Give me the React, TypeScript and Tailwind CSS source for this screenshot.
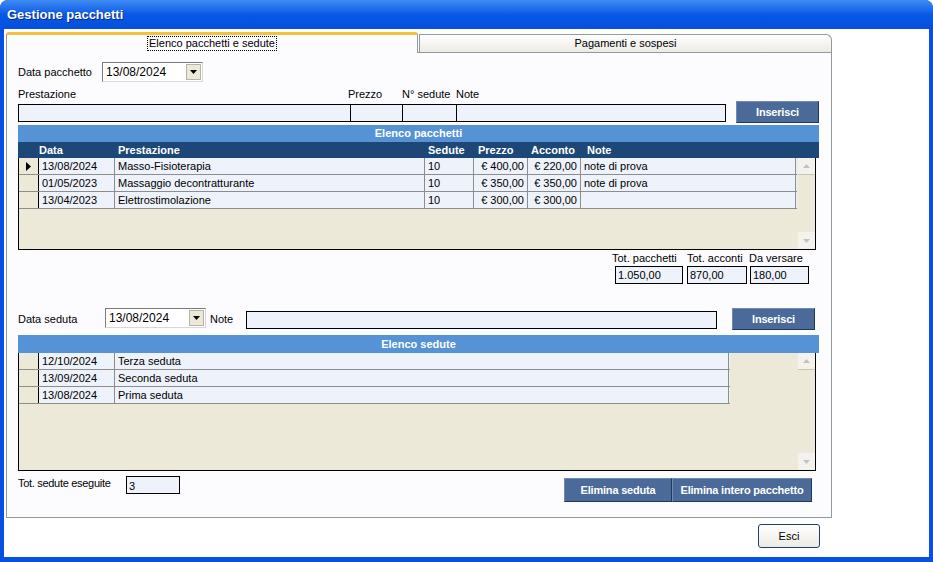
import React from 'react';

const pkgCols = ['w-[76px]', 'w-[310px]', 'w-[49px]', 'w-[54px] text-right', 'w-[53px] text-right', 'w-[215px]'];
const pkgRows = [
  ['13/08/2024', 'Masso-Fisioterapia', '10', '€ 400,00', '€ 220,00', 'note di prova'],
  ['01/05/2023', 'Massaggio decontratturante', '10', '€ 350,00', '€ 350,00', 'note di prova'],
  ['13/04/2023', 'Elettrostimolazione', '10', '€ 300,00', '€ 300,00', ''],
];

const sedCols = ['w-[76px]', 'w-[614px]'];
const sedRows = [
  ['12/10/2024', 'Terza seduta'],
  ['13/09/2024', 'Seconda seduta'],
  ['13/08/2024', 'Prima seduta'],
];

function Combo({ className }: { className: string }) {
  return (
    <div className={`flex h-[20px] items-center border border-t-[#7a7a7a] border-l-[#7a7a7a] border-r-[#d8d8d8] border-b-[#d8d8d8] bg-white ${className}`}>
      <span className="flex-1 pl-[3px] text-[12px] leading-none">13/08/2024</span>
      <div className="mr-[1px] flex h-[16px] w-[15px] items-center justify-center border border-[#b5b2a6] bg-[#ece9d8]">
        <svg width="7" height="4" viewBox="0 0 7 4">
          <path d="M0 0h7L3.5 4z" fill="#000" />
        </svg>
      </div>
    </div>
  );
}

function BlueButton({ label, className }: { label: string; className: string }) {
  return (
    <button className={`flex items-center justify-center border border-t-[#6f8bb5] border-l-[#6f8bb5] border-r-[#22385b] border-b-[#22385b] bg-[#4b6a99] text-[11px] font-bold tracking-[-0.2px] text-white ${className}`}>
      {label}
    </button>
  );
}

function ScrollBar() {
  return (
    <div className="flex w-[17px] flex-col justify-between bg-[#ece9d8]">
      <div className="flex h-[17px] items-center justify-center border-b border-[#c9c6b8] bg-[#f3f2ec]">
        <svg width="7" height="4" viewBox="0 0 7 4">
          <path d="M0 4h7L3.5 0z" fill="#c2c2c2" />
        </svg>
      </div>
      <div className="flex h-[17px] items-center justify-center bg-[#f3f2ec]">
        <svg width="7" height="4" viewBox="0 0 7 4">
          <path d="M0 0h7L3.5 4z" fill="#c2c2c2" />
        </svg>
      </div>
    </div>
  );
}

function GridRow({ cells, cols, arrow, width }: { cells: string[]; cols: string[]; arrow?: boolean; width: string }) {
  return (
    <div className={`flex h-[17px] border-b border-[#8d8d8d] bg-[#eef2fa] ${width}`}>
      <div className="flex w-[20px] items-center justify-center border-r border-black bg-[#ece9d8]">
        {arrow && (
          <svg width="5" height="9" viewBox="0 0 5 9">
            <path d="M0 0l5 4.5L0 9z" fill="#000" />
          </svg>
        )}
      </div>
      {cells.map((c, i) => (
        <div
          key={i}
          className={`${cols[i]} overflow-hidden whitespace-nowrap border-r border-[#8d8d8d] px-[3px] text-[11px] leading-[16px] text-black`}
        >
          {c}
        </div>
      ))}
    </div>
  );
}

export default function App() {
  return (
    <div className="flex h-[562px] w-[933px] flex-col overflow-hidden rounded-t-[8px] bg-[#0850df] font-['Liberation_Sans',Arial,sans-serif]">
      {/* title bar */}
      <div className="flex h-[29px] items-center bg-gradient-to-b from-[#3f8cf3] via-[#0758e6] to-[#0550dc] px-[7px]">
        <span className="text-[13px] font-bold text-white [text-shadow:1px_1px_#0a2a80]">Gestione pacchetti</span>
      </div>

      {/* client */}
      <div className="mx-[4px] mb-[5px] flex flex-1 flex-col bg-white pl-[2px] pt-[3px]">
        {/* tabs */}
        <div className="flex h-[20px]">
          <div className="relative z-10 flex h-[21px] w-[412px] items-start justify-center rounded-t-[3px] border-l border-r border-[#919b9c] border-t-[3px] border-t-[#f5c040] bg-[#fcfcfe]">
            <span className="mt-[1px] border border-dotted border-black px-[1px] text-[11px] leading-[13px] text-black">Elenco pacchetti e sedute</span>
          </div>
          <div className="ml-[1px] mt-[2px] flex h-[18px] w-[413px] items-center justify-center rounded-tr-[6px] border border-b-0 border-[#919b9c] bg-gradient-to-b from-white to-[#eceae4]">
            <span className="text-[11px] text-black">Pagamenti e sospesi</span>
          </div>
        </div>

        {/* panel */}
        <div className="flex h-[466px] w-[826px] flex-col border border-[#919b9c] bg-[#fcfcfe] pl-[11px] text-black">
          {/* data pacchetto */}
          <div className="mt-[9px] flex items-center">
            <span className="w-[84px] text-[11px]">Data pacchetto</span>
            <Combo className="w-[101px]" />
          </div>

          {/* labels */}
          <div className="mt-[6px] flex h-[13px] items-center text-[11px] leading-none">
            <span className="w-[330px]">Prestazione</span>
            <span className="w-[54px]">Prezzo</span>
            <span className="w-[54px]">N° sedute</span>
            <span>Note</span>
          </div>

          {/* inputs */}
          <div className="flex h-[22px] items-start">
            <div className="mt-[3px] flex h-[18px] w-[708px] border border-black bg-[#eef2fa]">
              <div className="w-[331px]" />
              <div className="w-[52px] border-l border-black" />
              <div className="w-[54px] border-l border-black" />
              <div className="flex-1 border-l border-black" />
            </div>
            <BlueButton label="Inserisci" className="ml-[10px] h-[22px] w-[83px]" />
          </div>

          {/* elenco pacchetti */}
          <div className="mt-[2px] flex h-[17px] w-[801px] items-center justify-center bg-[#5692d6] text-[11px] font-bold text-white">
            Elenco pacchetti
          </div>
          <div className="flex h-[16px] w-[801px] items-center bg-[#1d4777] text-[11px] font-bold text-white">
            <span className="w-[21px]" />
            <span className="w-[79px]">Data</span>
            <span className="w-[310px]">Prestazione</span>
            <span className="w-[50px]">Sedute</span>
            <span className="w-[53px]">Prezzo</span>
            <span className="w-[56px]">Acconto</span>
            <span>Note</span>
          </div>
          <div className="flex h-[92px] w-[798px] border border-t-0 border-black bg-[#ece9d8]">
            <div className="flex-1">
              {pkgRows.map((r, i) => (
                <GridRow key={i} cells={r} cols={pkgCols} arrow={i === 0} width="w-[778px]" />
              ))}
            </div>
            <ScrollBar />
          </div>

          {/* totals */}
          <div className="ml-[597px] mt-[1px] flex h-[14px] items-center text-[11px] leading-none">
            <span className="-ml-[3px] w-[75px] whitespace-nowrap">Tot. pacchetti</span>
            <span className="w-[62px] whitespace-nowrap">Tot. acconti</span>
            <span className="whitespace-nowrap">Da versare</span>
          </div>
          <div className="ml-[597px] mt-[1px] flex gap-[4px]">
            <div className="h-[18px] w-[68px] border border-black bg-[#eef2fa] pl-[2px] text-[11px] leading-[16px]">1.050,00</div>
            <div className="h-[18px] w-[60px] border border-black bg-[#eef2fa] pl-[2px] text-[11px] leading-[16px]">870,00</div>
            <div className="-ml-[1px] h-[18px] w-[59px] border border-black bg-[#eef2fa] pl-[2px] text-[11px] leading-[16px]">180,00</div>
          </div>

          {/* data seduta */}
          <div className="mt-[24px] flex h-[22px] items-start">
            <span className="mt-[3px] w-[87px] text-[11px]">Data seduta</span>
            <Combo className="w-[101px]" />
            <span className="ml-[4px] mt-[3px] w-[36px] text-[11px]">Note</span>
            <div className="mt-[3px] h-[18px] w-[471px] border border-black bg-[#eef2fa]" />
            <BlueButton label="Inserisci" className="ml-[15px] h-[22px] w-[83px]" />
          </div>

          {/* elenco sedute */}
          <div className="mt-[5px] flex h-[18px] w-[801px] items-center justify-center bg-[#5692d6] text-[11px] font-bold text-white">
            Elenco sedute
          </div>
          <div className="flex h-[118px] w-[798px] border border-t-0 border-black bg-[#ece9d8]">
            <div className="flex-1">
              {sedRows.map((r, i) => (
                <GridRow key={i} cells={r} cols={sedCols} width="w-[711px]" />
              ))}
            </div>
            <ScrollBar />
          </div>

          {/* bottom */}
          <div className="mt-[5px] flex h-[26px] items-start">
            <span className="mt-[1px] w-[108px] text-[11px] leading-[12px] tracking-[-0.3px]">Tot. sedute eseguite</span>
            <div className="h-[18px] w-[54px] border border-black bg-[#eef2fa] pl-[2px] text-[11px] leading-[18px]">3</div>
            <BlueButton label="Elimina seduta" className="ml-[384px] mt-[2px] h-[24px] w-[108px]" />
            <BlueButton label="Elimina intero pacchetto" className="mt-[2px] h-[24px] w-[140px]" />
          </div>
        </div>

        {/* esci */}
        <div className="mt-[6px] flex">
          <button className="ml-[752px] flex h-[24px] w-[62px] items-center justify-center rounded-[3px] border border-[#1f3f70] bg-gradient-to-b from-white to-[#ecebe4] text-[11px] text-black">
            Esci
          </button>
        </div>
      </div>
    </div>
  );
}
